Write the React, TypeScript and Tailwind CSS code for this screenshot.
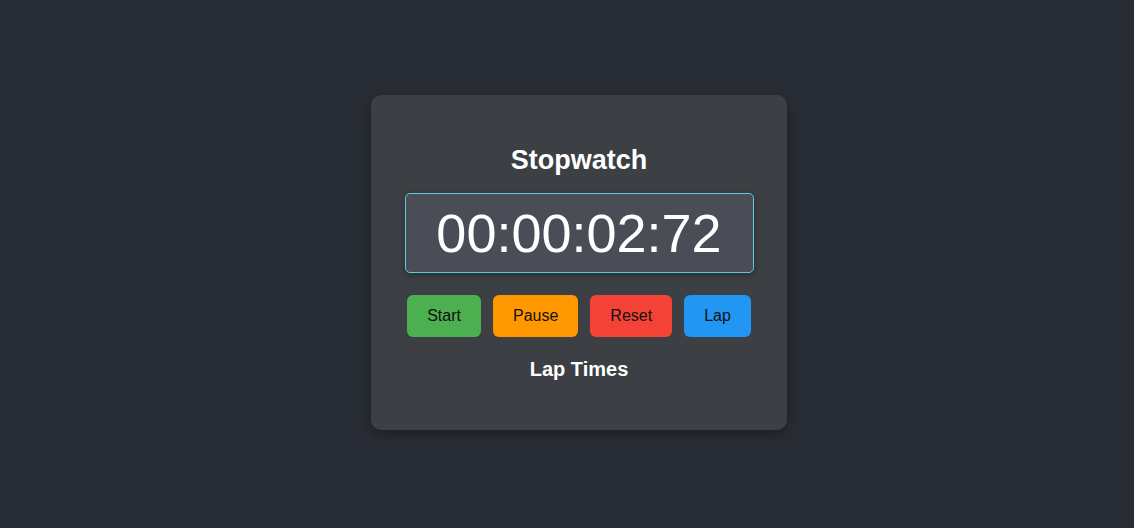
import React from "react";

export default function App() {
  return (
    <div
      className="w-full h-[528px] bg-[#282c34] flex items-center justify-center pl-[24px]"
      style={{ fontFamily: '"Liberation Sans", Arial, sans-serif' }}
    >
      <div className="w-[416px] h-[335px] mt-[-3px] bg-[#3c3f43] rounded-[10px] shadow-[0_4px_12px_rgba(0,0,0,0.3)] px-[30px] pt-[30px] flex flex-col items-center">
        <h2 className="text-[27px] leading-[30px] font-bold text-white mt-[20px] mb-[18px]">Stopwatch</h2>
        <div className="w-[349px] h-[80px] bg-[#4a4d55] border border-[#5ec8e6] rounded-[5px] shadow-[0_2px_6px_rgba(0,0,0,0.3)] flex items-center justify-center">
          <span className="text-[54px] leading-none text-white">00:00:02:72</span>
        </div>
        <div className="flex gap-3 mt-[22px]">
          <button className="px-5 py-3 text-[16px] leading-[18px] rounded-[6px] bg-[#4caf50] text-[#111]">Start</button>
          <button className="px-5 py-3 text-[16px] leading-[18px] rounded-[6px] bg-[#ff9800] text-[#111]">Pause</button>
          <button className="px-5 py-3 text-[16px] leading-[18px] rounded-[6px] bg-[#f44336] text-[#111]">Reset</button>
          <button className="px-5 py-3 text-[16px] leading-[18px] rounded-[6px] bg-[#2196f3] text-[#111]">Lap</button>
        </div>
        <h3 className="text-[20px] leading-[23px] font-bold text-white mt-[21px]">Lap Times</h3>
      </div>
    </div>
  );
}
